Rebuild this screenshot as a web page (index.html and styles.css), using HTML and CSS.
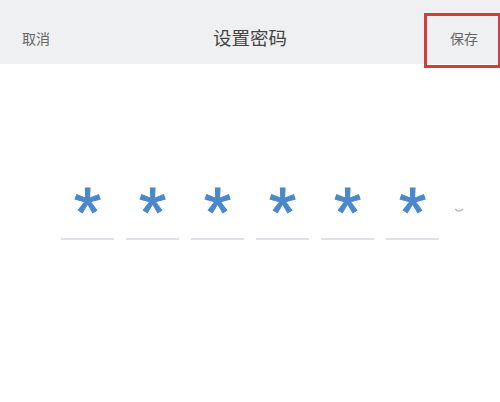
FILE: index.html
```html
<!DOCTYPE html>
<html lang="zh-CN">
<head>
  <meta charset="UTF-8">
  <title>设置密码</title>
  <link rel="stylesheet" href="styles.css">
</head>
<body>

  <div class="barra">
    <span class="accion">取消</span>
    <span class="titulo">设置密码</span>
    <span class="accion guardar">保存</span>
  </div>

  <div class="clave">
    <div class="casilla"><span>*</span></div>
    <div class="casilla"><span>*</span></div>
    <div class="casilla"><span>*</span></div>
    <div class="casilla"><span>*</span></div>
    <div class="casilla"><span>*</span></div>
    <div class="casilla"><span>*</span></div>
    <svg class="flecha" width="10" height="6" viewBox="0 0 10 6">
      <path d="M1 1 Q5 5 9 1" fill="none" stroke="#b8bcc2" stroke-width="1.2"/>
    </svg>
  </div>

</body>
</html>
```

FILE: styles.css
```css
body {
  font-family: "Noto Sans CJK SC", "Liberation Sans", sans-serif;
  background-color: #fff;
  margin: 0;
  width: 500px;
  height: 402px;
  overflow: hidden;
}
.barra {
  position: relative;
  height: 64px;
  background-color: #eff0f2;
  display: flex;
  align-items: center;
  justify-content: center;
}
.accion {
  position: absolute;
  top: 28px;
  font-size: 14px;
  line-height: 20px;
  color: #666;
}
.accion:first-child {
  left: 22px;
}
.guardar {
  right: 22px;
}
/* recuadro rojo sobre el botón */
.guardar::after {
  content: "";
  position: absolute;
  left: -26px;
  right: -23px;
  top: -15px;
  bottom: -20px;
  border: 3px solid #d43c3c;
}
.titulo {
  font-size: 18.5px;
  color: #444;
  margin-top: 10px;
}
.clave {
  display: flex;
  gap: 12px;
  padding: 116px 0 0 61px;
  position: relative;
}
.casilla {
  width: 53px;
  height: 58px;
  border-bottom: 2px solid #dfe1e4;
  display: flex;
  justify-content: center;
}
.casilla span {
  font-family: "Liberation Sans", sans-serif;
  font-size: 70px;
  line-height: 70px;
  color: #4a88cb;
  margin-top: -2px;
  -webkit-text-stroke: 1px #4a88cb;
}
.flecha {
  position: absolute;
  left: 454px;
  top: 144px;
}
```
